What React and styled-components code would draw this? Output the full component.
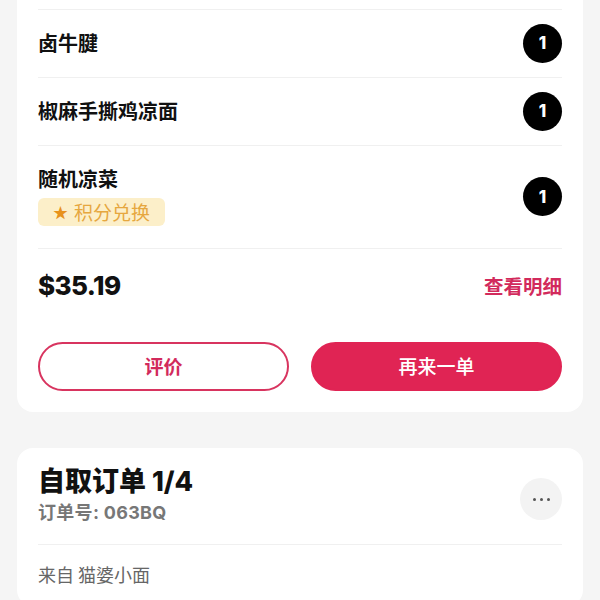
import React from "react";
import styled, { createGlobalStyle } from "styled-components";

const Global = createGlobalStyle`
  html, body { margin: 0; padding: 0; background: #f5f5f5; }
  body { font-family: Inter, "Noto Sans CJK SC", sans-serif; -webkit-font-smoothing: antialiased; overflow: hidden; }
`;

const Page = styled.div`
  padding: 0 17px;
  display: flex;
  flex-direction: column;
  gap: 36px;
`;

const Card = styled.div`
  background: #fff;
  border-radius: 16px;
  padding: ${(p) => p.$pad || "0 21px 21px"};
  margin-top: ${(p) => p.$mt || "0"};
`;

const ItemRow = styled.div`
  display: flex;
  align-items: center;
  justify-content: space-between;
  border-top: 1px solid #f0f0f0;
  padding: 21px 0 22px;
`;

const ItemInfo = styled.div`
  display: flex;
  flex-direction: column;
  align-items: flex-start;
  gap: 7px;
`;

const ItemName = styled.div`
  font-family: "Noto Sans CJK SC", sans-serif;
  font-size: 20px;
  line-height: 24px;
  font-weight: 600;
  color: #111;
`;

const Badge = styled.div`
  height: 28px;
  padding: 0 15px;
  display: flex;
  align-items: center;
  gap: 6px;
  background: #fcefc9;
  border-radius: 6px;
  font-family: "Noto Sans CJK SC", sans-serif;
  font-size: 19px;
  line-height: 28px;
  color: #e6a73f;
`;

const Star = styled.span`
  color: #e8921c;
  font-size: 15px;
`;

const Qty = styled.div`
  width: 39px;
  height: 39px;
  margin: -8px 0;
  border-radius: 50%;
  background: #000;
  color: #fff;
  display: flex;
  align-items: center;
  justify-content: center;
  font-family: Inter, sans-serif;
  font-weight: 800;
  font-size: 17px;
`;

const Summary = styled.div`
  border-top: 1px solid #f0f0f0;
  padding-top: 24px;
  display: flex;
  align-items: center;
  justify-content: space-between;
`;

const Price = styled.div`
  font-family: Inter, sans-serif;
  font-size: 26px;
  line-height: 26px;
  font-weight: 800;
  letter-spacing: -0.6px;
  color: #111;
`;

const LinkText = styled.div`
  font-family: "Noto Sans CJK SC", sans-serif;
  font-size: 19.5px;
  line-height: 26px;
  font-weight: 700;
  color: #d22a5c;
`;

const Actions = styled.div`
  margin-top: 43px;
  display: grid;
  grid-template-columns: 1fr 1fr;
  gap: 22px;
`;

const Btn = styled.button`
  height: 49px;
  border-radius: 25px;
  border: 2px solid;
  background: ${(p) => (p.$filled ? "#e02454" : "#fff")};
  border-color: ${(p) => (p.$filled ? "#e02454" : "#d8345f")};
  color: ${(p) => (p.$filled ? "#fff" : "#d22a5c")};
  font-family: "Noto Sans CJK SC", sans-serif;
  font-size: 19px;
  line-height: 24px;
  font-weight: ${(p) => (p.$filled ? 500 : 700)};
  padding: 0 0 2px;
`;

const Header = styled.div`
  display: flex;
  align-items: center;
  justify-content: space-between;
  padding-bottom: 20px;
`;

const Titles = styled.div`
  display: flex;
  flex-direction: column;
  gap: 4px;
`;

const Title = styled.div`
  font-family: Inter, "Noto Sans CJK SC", sans-serif;
  font-size: 27px;
  line-height: 32px;
  font-weight: 800;
  color: #111;
`;

const Sub = styled.div`
  font-family: Inter, "Noto Sans CJK SC", sans-serif;
  font-size: 18px;
  line-height: 22px;
  font-weight: 700;
  letter-spacing: 0.3px;
  color: #777;
`;

const MoreBtn = styled.div`
  width: 42px;
  height: 42px;
  border-radius: 50%;
  background: #f3f3f3;
  margin-top: 8px;
  display: flex;
  align-items: center;
  justify-content: center;
  gap: 4px;
`;

const Dot = styled.span`
  width: 3px;
  height: 3px;
  border-radius: 50%;
  background: #555;
`;

const From = styled.div`
  border-top: 1px solid #f0f0f0;
  padding-top: 18px;
  font-family: "Noto Sans CJK SC", sans-serif;
  font-size: 18px;
  line-height: 22px;
  color: #666;
`;

const items = [
  { name: "卤牛腱", qty: 1 },
  { name: "椒麻手撕鸡凉面", qty: 1 },
  { name: "随机凉菜", qty: 1, badge: "积分兑换" },
];

export default function App() {
  return (
    <>
      <Global />
      <Page>
        <Card $mt="-20px" $pad="29px 21px 21px">
          {items.map((it) => (
            <ItemRow key={it.name}>
              <ItemInfo>
                <ItemName>{it.name}</ItemName>
                {it.badge && (
                  <Badge>
                    <Star>★</Star>
                    {it.badge}
                  </Badge>
                )}
              </ItemInfo>
              <Qty>{it.qty}</Qty>
            </ItemRow>
          ))}
          <Summary>
            <Price>$35.19</Price>
            <LinkText>查看明细</LinkText>
          </Summary>
          <Actions>
            <Btn>评价</Btn>
            <Btn $filled>再来一单</Btn>
          </Actions>
        </Card>
        <Card $pad="18px 21px 21px">
          <Header>
            <Titles>
              <Title>自取订单 1/4</Title>
              <Sub>订单号: 063BQ</Sub>
            </Titles>
            <MoreBtn>
              <Dot />
              <Dot />
              <Dot />
            </MoreBtn>
          </Header>
          <From>来自 猫婆小面</From>
        </Card>
      </Page>
    </>
  );
}
